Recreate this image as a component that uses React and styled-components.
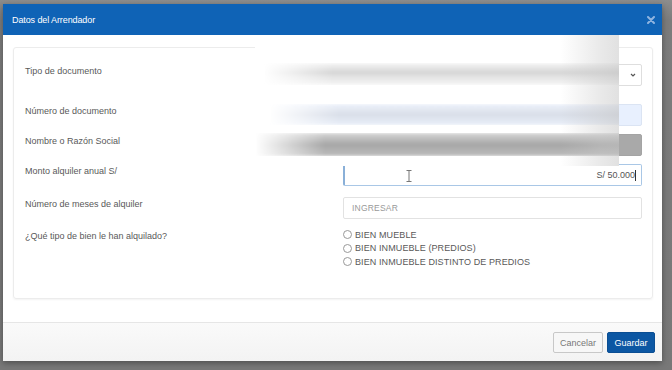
import React from "react";
import styled, { createGlobalStyle } from "styled-components";

const GlobalStyle = createGlobalStyle`
  html, body {
    margin: 0;
    padding: 0;
    background: #7c7c7c;
    font-family: "Liberation Sans", Arial, sans-serif;
  }
`;

const Page = styled.div`
  width: 672px;
  height: 370px;
  box-sizing: border-box;
  padding: 4px 0 0 3px;
  background: linear-gradient(180deg, #8d8d8d 0, #7c7c7c 20px, #787878 100%);
  overflow: hidden;
`;

const Modal = styled.div`
  position: relative;
  width: 659px;
  height: 357px;
  background: #fff;
  display: flex;
  flex-direction: column;
  box-shadow: 0 2px 6px rgba(0, 0, 0, 0.35);
`;

const Header = styled.div`
  height: 31px;
  flex: none;
  background: #0f63b6;
  display: flex;
  align-items: center;
  justify-content: space-between;
  padding: 0 7px 0 9px;
`;

const Title = styled.span`
  color: #fff;
  font-size: 9px;
  letter-spacing: -0.1px;
`;

const Body = styled.div`
  padding: 12px 9px 23px 10px;
`;

const Card = styled.div`
  height: 252px;
  box-sizing: border-box;
  border: 1px solid #ececec;
  border-radius: 3px;
  box-shadow: 0 1px 2px rgba(0, 0, 0, 0.05);
  padding: 16px 10px 0 11px;
`;

const Row = styled.div`
  display: flex;
  align-items: flex-start;
  justify-content: space-between;
  margin-top: ${(p) => p.$gap || 0}px;
`;

const Label = styled.div`
  font-size: 9px;
  line-height: 14px;
  color: #595959;
`;

const fieldBg = {
  select: "#fff",
  blue: "#e8f0fe",
  disabled: "#a9a9a9",
  focus: "#fff",
  plain: "#fff",
};

const fieldBorder = {
  select: "#dedede",
  blue: "#dbe4f3",
  disabled: "#a4a4a4",
  focus: "#a9c7e6",
  plain: "#e2e2e2",
};

const Field = styled.div`
  width: 299px;
  height: 22px;
  box-sizing: border-box;
  border: 1px solid ${(p) => fieldBorder[p.$variant]};
  border-left: ${(p) => (p.$variant === "focus" ? "2px solid #8ab0d8" : "")};
  border-radius: 2px;
  background: ${(p) => fieldBg[p.$variant]};
  display: flex;
  align-items: center;
  justify-content: ${(p) => (p.$variant === "select" || p.$variant === "focus" ? "flex-end" : "flex-start")};
  padding: 0 5px 0 8px;
  font-size: 9px;
  color: #555;
`;

const Placeholder = styled.span`
  color: #999;
  font-size: 8.5px;
  letter-spacing: 0.2px;
`;

const Caret = styled.span`
  display: inline-block;
  width: 1px;
  height: 11px;
  background: #333;
`;

const Radios = styled.div`
  width: 299px;
  display: flex;
  flex-direction: column;
  margin-top: -1px;
`;

const RadioLine = styled.label`
  display: flex;
  align-items: center;
  gap: 3px;
  height: 13.5px;
  font-size: 9px;
  color: #595959;
  letter-spacing: 0.1px;
`;

const RadioDot = styled.span`
  width: 7px;
  height: 7px;
  border: 1px solid #999;
  border-radius: 50%;
  background: #fff;
  flex: none;
`;

const Footer = styled.div`
  flex: 1;
  border-top: 1px solid #e6e6e6;
  background: linear-gradient(180deg, #fafafa 0, #f3f3f3 100%);
  display: flex;
  justify-content: flex-end;
  align-items: flex-start;
  gap: 4px;
  padding: 9px 7px 0 0;
`;

const Button = styled.button`
  height: 21px;
  width: ${(p) => p.$w}px;
  box-sizing: border-box;
  border-radius: 2px;
  font-family: inherit;
  font-size: 9px;
  padding: 0;
  border: 1px solid ${(p) => (p.$primary ? "#0b4e93" : "#c8c8c8")};
  background: ${(p) => (p.$primary ? "#0c57a3" : "#f7f7f7")};
  color: ${(p) => (p.$primary ? "#fff" : "#777")};
`;

const Censor = styled.div`
  position: absolute;
  left: 252px;
  top: 31px;
  width: 364px;
  height: 131px;
  background: #fff;
  overflow: hidden;
  &::after {
    content: "";
    position: absolute;
    inset: 0;
    background: linear-gradient(
      90deg,
      rgba(210, 210, 210, 0) 0,
      rgba(210, 210, 210, 0) 84%,
      rgba(200, 200, 200, 0.4) 95%,
      rgba(195, 195, 195, 0.5) 100%
    );
  }
`;

const Streak = styled.div`
  position: absolute;
  left: ${(p) => p.$left}px;
  right: -10px;
  top: ${(p) => p.$top}px;
  height: ${(p) => p.$h}px;
  background: ${(p) => p.$bg};
  filter: blur(1.5px);
  -webkit-mask-image: linear-gradient(90deg, transparent 0, #000 70px);
  mask-image: linear-gradient(90deg, transparent 0, #000 70px);
`;

const Cursor = styled.svg`
  position: absolute;
  left: 403px;
  top: 166px;
`;

const Chevron = () => (
  <svg width="6" height="4" viewBox="0 0 6 4">
    <polyline points="1,1 3,3 5,1" fill="none" stroke="#555" strokeWidth="1.2" />
  </svg>
);

const CloseIcon = () => (
  <svg width="8" height="8" viewBox="0 0 8 8">
    <path d="M1 1 L7 7 M7 1 L1 7" stroke="#8fb4e0" strokeWidth="2" strokeLinecap="round" />
  </svg>
);

const radios = ["BIEN MUEBLE", "BIEN INMUEBLE (PREDIOS)", "BIEN INMUEBLE DISTINTO DE PREDIOS"];

export default function App() {
  return (
    <Page>
      <GlobalStyle />
      <Modal>
        <Header>
          <Title>Datos del Arrendador</Title>
          <CloseIcon />
        </Header>
        <Body>
          <Card>
            <Row>
              <Label>Tipo de documento</Label>
              <Field $variant="select">
                <Chevron />
              </Field>
            </Row>
            <Row $gap={18}>
              <Label>Número de documento</Label>
              <Field $variant="blue" />
            </Row>
            <Row $gap={8}>
              <Label>Nombre o Razón Social</Label>
              <Field $variant="disabled" />
            </Row>
            <Row $gap={8}>
              <Label>Monto alquiler anual S/</Label>
              <Field $variant="focus">
                S/ 50.000
                <Caret />
              </Field>
            </Row>
            <Row $gap={11}>
              <Label>Número de meses de alquiler</Label>
              <Field $variant="plain">
                <Placeholder>INGRESAR</Placeholder>
              </Field>
            </Row>
            <Row $gap={10}>
              <Label>¿Qué tipo de bien le han alquilado?</Label>
              <Radios>
                {radios.map((r) => (
                  <RadioLine key={r}>
                    <RadioDot />
                    {r}
                  </RadioLine>
                ))}
              </Radios>
            </Row>
          </Card>
        </Body>
        <Footer>
          <Button $w={50}>Cancelar</Button>
          <Button $w={48} $primary>
            Guardar
          </Button>
        </Footer>
        <Censor>
          <Streak $left={8} $top={28} $h={22} $bg="linear-gradient(180deg, #f6f6f6 0, #d4d4d4 45%, #e2e2e2 60%, #f5f5f5 100%)" />
          <Streak $left={14} $top={69} $h={21} $bg="linear-gradient(180deg, #edf2fb 0, #d9dee8 50%, #e9eff9 100%)" />
          <Streak $left={0} $top={98} $h={23} $bg="linear-gradient(180deg, #d6d6d6 0, #a6a6a6 50%, #bdbdbd 100%)" />
        </Censor>
        <Cursor width="6" height="12" viewBox="0 0 6 12">
          <path d="M0.5 0.5 H5.5 M3 0.5 V11.5 M0.5 11.5 H5.5" stroke="#777" strokeWidth="1" fill="none" />
        </Cursor>
      </Modal>
    </Page>
  );
}
